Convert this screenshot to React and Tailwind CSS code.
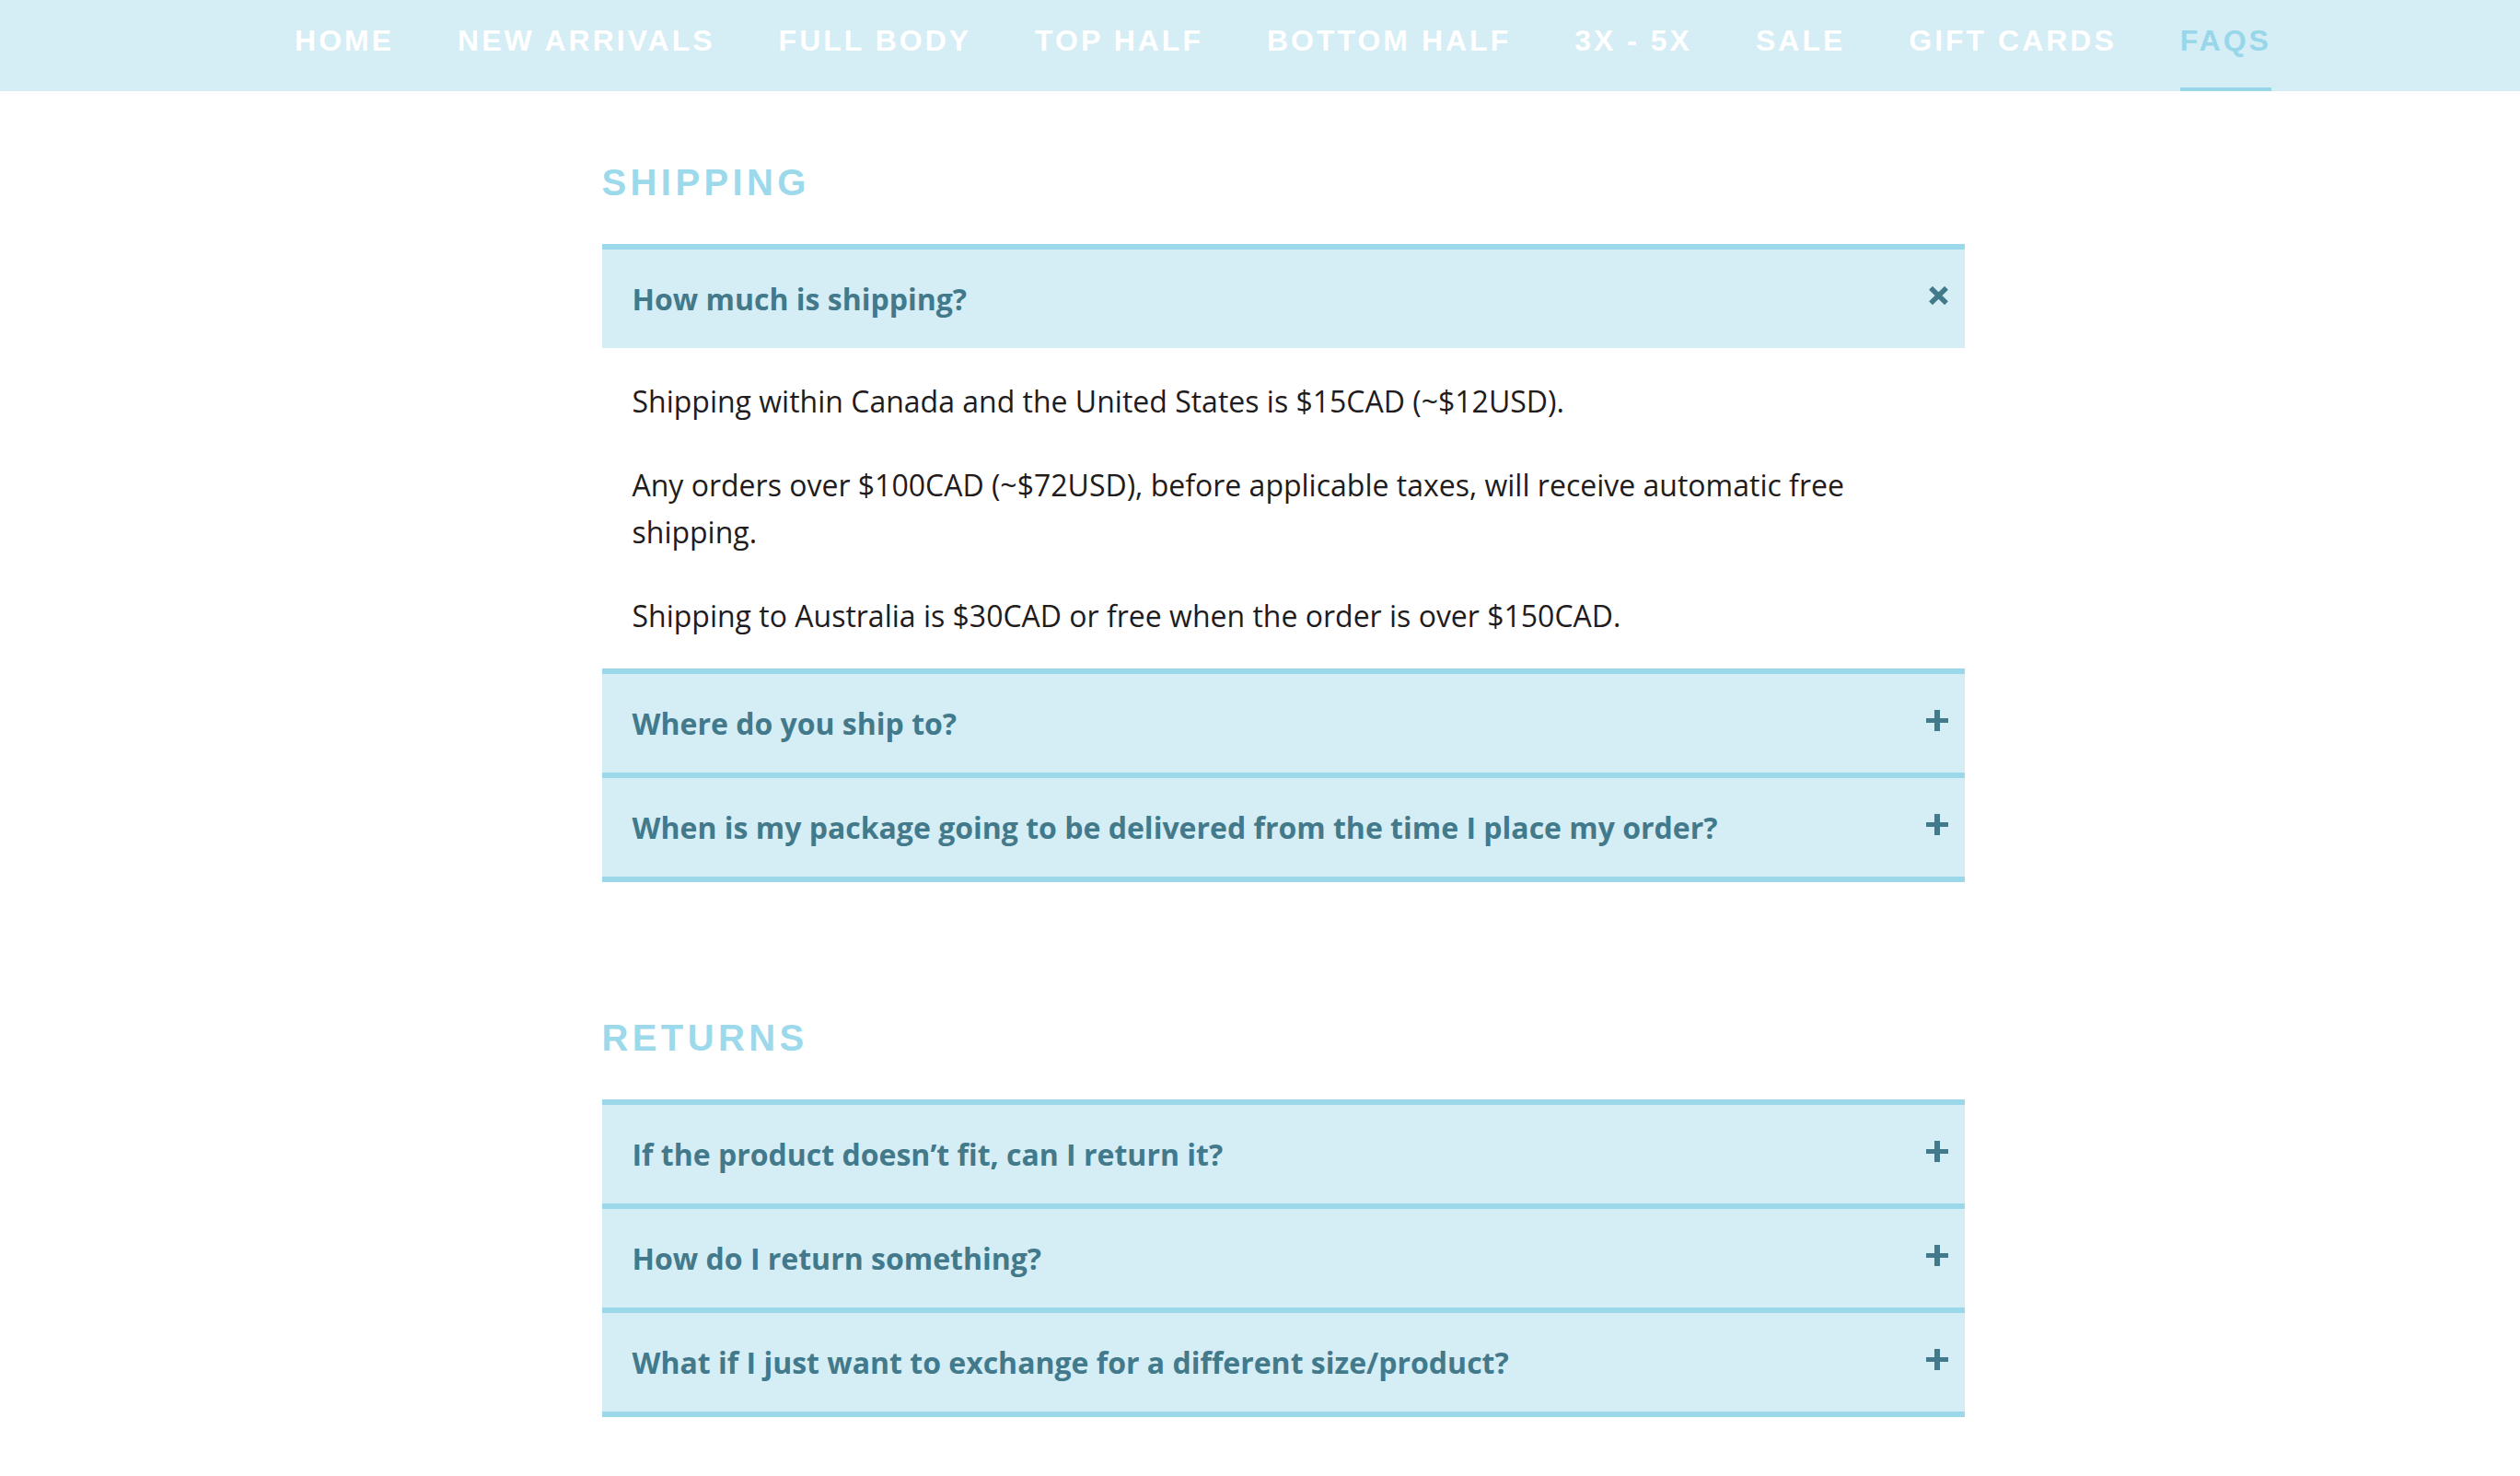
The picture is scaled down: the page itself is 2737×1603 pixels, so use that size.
import React from "react";

const NAV = ["HOME", "NEW ARRIVALS", "FULL BODY", "TOP HALF", "BOTTOM HALF", "3X - 5X", "SALE", "GIFT CARDS", "FAQS"];

function PlusIcon() {
  return (
    <svg width="24" height="23" viewBox="0 0 24 23" className="mb-[6px] shrink-0" aria-hidden="true">
      <rect x="9" y="0" width="6" height="23" fill="#42798b" />
      <rect x="0" y="9" width="24" height="5" fill="#42798b" />
    </svg>
  );
}

function CloseIcon() {
  return (
    <svg width="21" height="20" viewBox="0 0 21 20" className="mb-[8px] shrink-0" aria-hidden="true">
      <path d="M2 1.8 L19 18.2 M19 1.8 L2 18.2" stroke="#42798b" strokeWidth="5.5" strokeLinecap="butt" />
    </svg>
  );
}

function Header({ title, open }) {
  return (
    <div className="border-t-[6px] border-[#9ad8ea] bg-[#d5edf5]">
      <div className="flex h-[107px] items-center justify-between pl-[33px] pr-[18px]">
        <span className="font-['Open_Sans',sans-serif] text-[32px] font-bold leading-[44px] text-[#42798b]">{title}</span>
        {open ? <CloseIcon /> : <PlusIcon />}
      </div>
    </div>
  );
}

function Section({ heading, items }) {
  return (
    <section>
      <h2 className="mb-[43px] font-['Liberation_Sans',Arial,sans-serif] text-[40px] font-bold leading-[48px] tracking-[4.4px] text-[#9bd9eb]">
        {heading}
      </h2>
      <div className="border-b-[6px] border-[#9ad8ea]">
        {items.map((it, i) => (
          <div key={i}>
            <Header title={it.title} open={!!it.body} />
            {it.body ? (
              <div className="px-[33px] pb-[32px] pt-[32px] font-['Open_Sans',sans-serif] text-[32px] leading-[51.5px] text-[#1f1c1d]">
                {it.body.map((p, j) => (
                  <p key={j} className={j < it.body.length - 1 ? "mb-[39px]" : ""}>
                    {p}
                  </p>
                ))}
              </div>
            ) : null}
          </div>
        ))}
      </div>
    </section>
  );
}

export default function App() {
  return (
    <div className="min-h-[1603px] bg-white">
      <nav className="h-[99px] bg-[#d5edf5] pl-[50px]">
        <ul className="flex h-full justify-center gap-[69px]">
          {NAV.map((n) => (
            <li
              key={n}
              className={
                "h-full pt-[26px] font-['Liberation_Sans',Arial,sans-serif] text-[32px] font-bold leading-[37px] tracking-[3px] " +
                (n === "FAQS" ? "border-b-4 border-[#98d6ea] text-[#98d6ea]" : "text-white")
              }
            >
              {n}
            </li>
          ))}
        </ul>
      </nav>
      <main className="pl-[50px]">
        <div className="mx-auto w-[1480px] pt-[75px]">
          <Section
            heading="SHIPPING"
            items={[
              {
                title: "How much is shipping?",
                body: [
                  "Shipping within Canada and the United States is $15CAD (~$12USD).",
                  "Any orders over $100CAD (~$72USD), before applicable taxes, will receive automatic free shipping.",
                  "Shipping to Australia is $30CAD or free when the order is over $150CAD.",
                ],
              },
              { title: "Where do you ship to?" },
              { title: "When is my package going to be delivered from the time I place my order?" },
            ]}
          />
          <div className="h-[145px]" />
          <Section
            heading="RETURNS"
            items={[
              { title: "If the product doesn\u2019t fit, can I return it?" },
              { title: "How do I return something?" },
              { title: "What if I just want to exchange for a different size/product?" },
            ]}
          />
        </div>
      </main>
    </div>
  );
}
